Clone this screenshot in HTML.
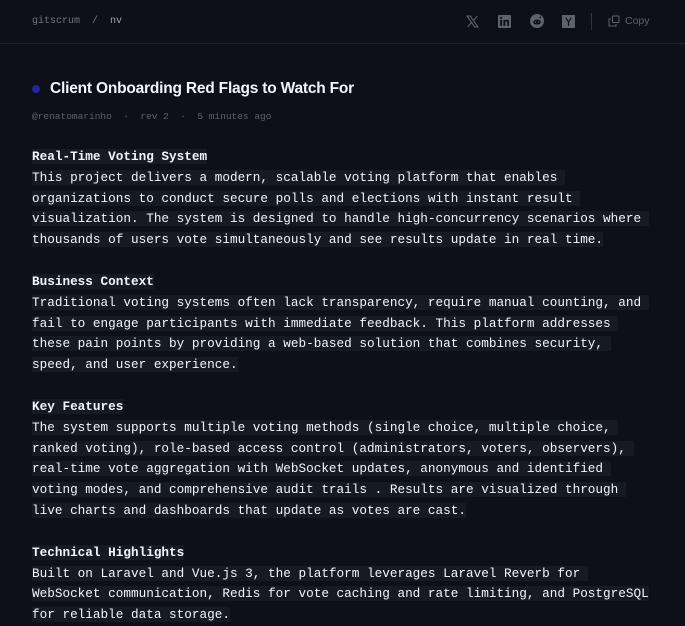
<!DOCTYPE html>
<html><head><meta charset="utf-8"><style>
*{margin:0;padding:0;box-sizing:border-box}
body{width:685px;height:608px;overflow:hidden;background:#0d1117;font-family:"Liberation Sans",sans-serif;color:#e6edf3}
.hdr{height:44px;border-bottom:1px solid #21262d;position:relative}
.crumb{position:absolute;left:32px;top:16px;font:10px "Liberation Mono",monospace;color:#6e7681}
.crumb b{color:#9da5ae;font-weight:normal}
.ic{position:absolute;top:0}
.sep{position:absolute;left:591px;top:13px;width:1px;height:17px;background:#30363d}
.copy{position:absolute;left:625px;top:15px;font:10.5px "Liberation Sans",sans-serif;color:#5c636b}
.title{position:absolute;left:50px;top:80px;font-size:15.5px;font-weight:bold;color:#f0f6fc;letter-spacing:-0.2px}
.dot{position:absolute;left:32px;top:85px;width:8px;height:8px;border-radius:50%;background:#2323a8}
.meta{position:absolute;left:32px;top:111px;font:9.5px "Liberation Mono",monospace;color:#5c636b;white-space:pre}
pre{position:absolute;left:32px;top:147px;font:12.7px/20.83px "Liberation Mono",monospace;color:#f0f6fc}
pre span{background:#161b22}
</style></head><body>
<div class="hdr">
<div class="crumb">gitscrum &nbsp;/&nbsp; <b>nv</b></div>
<svg class="ic" style="left:466px;top:15px" width="13" height="13" viewBox="0 0 24 24"><path d="M2 2h6l14 20h-6z M21 2L13.5 10.5 M3 22l7.5-8.5" stroke="#5c636b" stroke-width="2" fill="none"/></svg>
<svg class="ic" style="left:498px;top:15px" width="13" height="13" viewBox="0 0 24 24"><rect width="24" height="24" rx="2" fill="#5c636b"/><rect x="4" y="9" width="3.5" height="11" fill="#0d1117"/><circle cx="5.7" cy="5.3" r="2" fill="#0d1117"/><path d="M10 9h3.3v1.6c.6-1 1.8-1.9 3.6-1.9 3 0 3.6 2 3.6 4.6V20h-3.5v-5.8c0-1.4-.1-2.6-1.6-2.6-1.6 0-1.9 1.2-1.9 2.5V20H10z" fill="#0d1117"/></svg>
<svg class="ic" style="left:530px;top:14px" width="14" height="14" viewBox="0 0 24 24"><circle cx="12" cy="12" r="12" fill="#5c636b"/><ellipse cx="12" cy="14" rx="6.5" ry="4.3" fill="#0d1117"/><circle cx="9.5" cy="13.5" r="1.1" fill="#5c636b"/><circle cx="14.5" cy="13.5" r="1.1" fill="#5c636b"/><circle cx="17.5" cy="6" r="1.5" fill="#0d1117"/></svg>
<svg class="ic" style="left:562px;top:15px" width="13" height="13" viewBox="0 0 24 24"><rect width="24" height="24" fill="#5c636b"/><path d="M7 5l5 8 5-8M12 13v7" stroke="#0d1117" stroke-width="2.2" fill="none"/></svg>
<div class="sep"></div>
<svg class="ic" style="left:608px;top:15px" width="12" height="12" viewBox="0 0 24 24" fill="none" stroke="#5c636b" stroke-width="2"><rect x="9" y="2" width="13" height="13" rx="1"/><path d="M6 8H2v14h14v-4"/></svg>
<div class="copy">Copy</div>
</div>
<div class="dot"></div>
<div class="title">Client Onboarding Red Flags to Watch For</div>
<div class="meta">@renatomarinho  ·  rev 2  ·  5 minutes ago</div>
<pre><span><b>Real-Time Voting System</b></span>
<span>This project delivers a modern, scalable voting platform that enables </span>
<span>organizations to conduct secure polls and elections with instant result </span>
<span>visualization. The system is designed to handle high-concurrency scenarios where </span>
<span>thousands of users vote simultaneously and see results update in real time.</span>

<span><b>Business Context</b></span>
<span>Traditional voting systems often lack transparency, require manual counting, and </span>
<span>fail to engage participants with immediate feedback. This platform addresses </span>
<span>these pain points by providing a web-based solution that combines security, </span>
<span>speed, and user experience.</span>

<span><b>Key Features</b></span>
<span>The system supports multiple voting methods (single choice, multiple choice, </span>
<span>ranked voting), role-based access control (administrators, voters, observers), </span>
<span>real-time vote aggregation with WebSocket updates, anonymous and identified </span>
<span>voting modes, and comprehensive audit trails . Results are visualized through </span>
<span>live charts and dashboards that update as votes are cast.</span>

<span><b>Technical Highlights</b></span>
<span>Built on Laravel and Vue.js 3, the platform leverages Laravel Reverb for </span>
<span>WebSocket communication, Redis for vote caching and rate limiting, and PostgreSQL</span>
<span>for reliable data storage.</span></pre>
</body></html>
